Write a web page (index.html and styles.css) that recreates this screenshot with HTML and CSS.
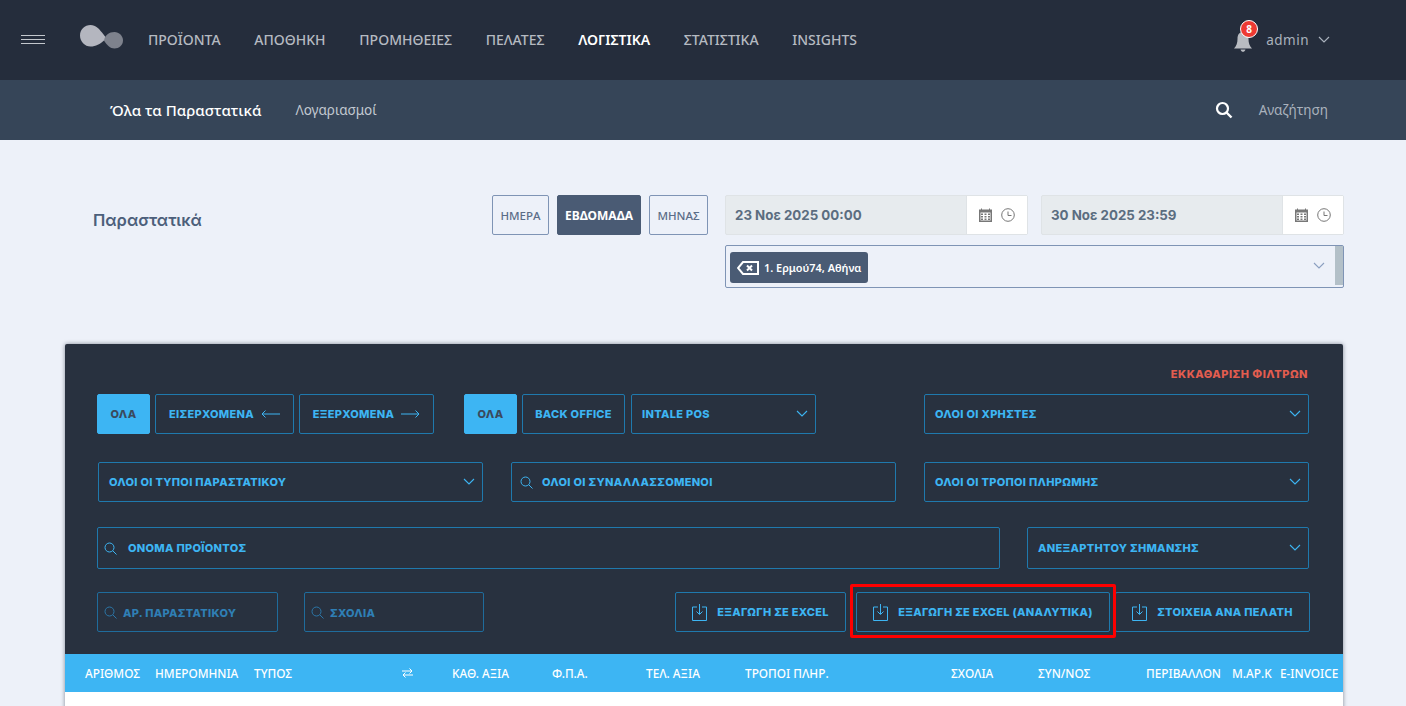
FILE: index.html
```html
<!DOCTYPE html>
<html lang="el">
<head>
<meta charset="utf-8">
<title>Παραστατικά</title>
<link rel="stylesheet" href="styles.css">
</head>
<body>
<header class="topbar">
  <svg class="burger" width="24" height="12" viewBox="0 0 24 12"><path d="M0 1.500h24M0 5.500h24M0 9.500h24" stroke="#c3c7cd" stroke-width="1.200"/></svg>
  <svg class="logo" width="46" height="28" viewBox="0 0 46 28"><path d="M0 12.500C0 6.500 4.800 2 10.500 2 16 2 19 6 22 9.500L27 16 24 17.500C20 21 16 23.500 10.500 23.500 4.800 23.500 0 18.500 0 12.500Z" fill="#b4b6bf"/><path d="M24 17.500C25 12 29 9 34.500 9 39 9 43 13 43 17.500 43 22 39 25.500 34.500 25.500 30 25.500 27 22 24 17.500Z" fill="#7e828d"/></svg>
  <nav class="mainnav">
    <a>ΠΡΟΪΟΝΤΑ</a><a>ΑΠΟΘΗΚΗ</a><a>ΠΡΟΜΗΘΕΙΕΣ</a><a>ΠΕΛΑΤΕΣ</a><a class="on">ΛΟΓΙΣΤΙΚΑ</a><a>ΣΤΑΤΙΣΤΙΚΑ</a><a>INSIGHTS</a>
  </nav>
  <div class="user">
    <div class="bell">
      <svg width="20" height="24" viewBox="0 0 20 24"><path d="M10 3C6 3 4.500 6 4.500 10 4.500 14 3.500 17 1 19.500H19C16.500 17 15.500 14 15.500 10 15.500 6 14 3 10 3ZM7.500 20.500C8 22 9 22.800 10 22.800 11 22.800 12 22 12.500 20.500Z" fill="#b9bcc2"/></svg>
      <span class="badge">8</span>
    </div>
    <span class="uname">admin</span>
    <svg width="12" height="8" viewBox="0 0 12 8"><path d="M1 1l5 5 5-5" fill="none" stroke="#aab2bd" stroke-width="1.200"/></svg>
  </div>
</header>
<div class="subbar">
  <a class="sub-on">Όλα τα Παραστατικά</a>
  <a class="sub-off">Λογαριασμοί</a>
  <svg class="mag" width="18" height="18" viewBox="0 0 18 18"><circle cx="7.500" cy="7.500" r="5.500" fill="none" stroke="#fff" stroke-width="2.200"/><path d="M11.500 11.500l5 5" stroke="#fff" stroke-width="2.400"/></svg>
  <span class="sub-search">Αναζήτηση</span>
</div>
<main class="page">
  <section class="controls">
    <h1 class="title">Παραστατικά</h1>
    <div class="periods">
      <button class="period w-day">ΗΜΕΡΑ</button>
      <button class="period period-on w-week">ΕΒΔΟΜΑΔΑ</button>
      <button class="period w-month">ΜΗΝΑΣ</button>
    </div>
    <div class="dates">
      <div class="daterow">
        <div class="date">
          <span class="date-val">23 Νοε 2025 00:00</span>
          <span class="date-ico">
            <svg width="13" height="14" viewBox="0 0 13 14"><path d="M0 1.500h13V14H0z" fill="#777"/><path d="M1.500 4.500h10v8h-10z" fill="#fff"/><path d="M2 0.500h1v2H2zM10 0.500h1v2h-1zM2 5.500h2v1.500H2zM5.500 5.500h2v1.500h-2zM9 5.500h2v1.500H9zM2 8h2v1.500H2zM5.500 8h2v1.500h-2zM9 8h2v1.500H9zM2 10.500h2V12H2zM5.500 10.500h2V12h-2zM9 10.500h2V12H9z" fill="#777"/></svg>
            <svg width="14" height="14" viewBox="0 0 14 14"><circle cx="7" cy="7" r="6.300" fill="none" stroke="#777"/><path d="M7 3.500V7.500h3.500" fill="none" stroke="#777"/></svg>
          </span>
        </div>
        <div class="date">
          <span class="date-val">30 Νοε 2025 23:59</span>
          <span class="date-ico">
            <svg width="13" height="14" viewBox="0 0 13 14"><path d="M0 1.500h13V14H0z" fill="#777"/><path d="M1.500 4.500h10v8h-10z" fill="#fff"/><path d="M2 0.500h1v2H2zM10 0.500h1v2h-1zM2 5.500h2v1.500H2zM5.500 5.500h2v1.500h-2zM9 5.500h2v1.500H9zM2 8h2v1.500H2zM5.500 8h2v1.500h-2zM9 8h2v1.500H9zM2 10.500h2V12H2zM5.500 10.500h2V12h-2zM9 10.500h2V12H9z" fill="#777"/></svg>
            <svg width="14" height="14" viewBox="0 0 14 14"><circle cx="7" cy="7" r="6.300" fill="none" stroke="#777"/><path d="M7 3.500V7.500h3.500" fill="none" stroke="#777"/></svg>
          </span>
        </div>
      </div>
      <div class="store">
        <span class="tag">
          <svg width="22" height="14" viewBox="0 0 22 14"><path d="M6 1h15v12H6L1 7z" fill="none" stroke="#fff" stroke-width="2"/><path d="M10 4.500l5 5M15 4.500l-5 5" stroke="#fff" stroke-width="2"/></svg>
          1. Ερμού74, Αθήνα
        </span>
        <svg class="store-chev" width="12" height="8" viewBox="0 0 12 8"><path d="M1 1l5 5 5-5" fill="none" stroke="#8b9fc0" stroke-width="1.100"/></svg>
        <span class="store-scroll"></span>
      </div>
    </div>
  </section>

  <section class="panel">
    <div class="panel-body">
      <a class="clear">ΕΚΚΑΘΑΡΙΣΗ ΦΙΛΤΡΩΝ</a>
      <div class="row r1">
        <button class="fbtn fill w-all">ΟΛΑ</button>
        <button class="fbtn w-in">ΕΙΣΕΡΧΟΜΕΝΑ <svg width="19" height="8" viewBox="0 0 19 8"><path d="M19 4H1M4.500 0.500L1 4l3.500 3.500" fill="none" stroke="#3db5f3"/></svg></button>
        <button class="fbtn w-out">ΕΞΕΡΧΟΜΕΝΑ <svg width="19" height="8" viewBox="0 0 19 8"><path d="M0 4h18M14.500 0.500L18 4l-3.500 3.500" fill="none" stroke="#3db5f3"/></svg></button>
        <button class="fbtn fill w-all gap-l">ΟΛΑ</button>
        <button class="fbtn w-bo">BACK OFFICE</button>
        <div class="fsel w-pos">INTALE POS<svg width="12" height="8" viewBox="0 0 12 8"><path d="M1 1l5 5 5-5" fill="none" stroke="#3db5f3" stroke-width="1.100"/></svg></div>
        <div class="fsel w-col push">ΟΛΟΙ ΟΙ ΧΡΗΣΤΕΣ<svg width="12" height="8" viewBox="0 0 12 8"><path d="M1 1l5 5 5-5" fill="none" stroke="#3db5f3" stroke-width="1.100"/></svg></div>
      </div>
      <div class="row r2">
        <div class="fsel w-col">ΟΛΟΙ ΟΙ ΤΥΠΟΙ ΠΑΡΑΣΤΑΤΙΚΟΥ<svg width="12" height="8" viewBox="0 0 12 8"><path d="M1 1l5 5 5-5" fill="none" stroke="#3db5f3" stroke-width="1.100"/></svg></div>
        <div class="fsearch w-col">
          <svg width="13" height="13" viewBox="0 0 13 13"><circle cx="5.500" cy="5.500" r="4.500" fill="none" stroke="#3db5f3"/><path d="M8.800 8.800L12.500 12.500" stroke="#3db5f3"/></svg>
          <span>ΟΛΟΙ ΟΙ ΣΥΝΑΛΛΑΣΣΟΜΕΝΟΙ</span>
        </div>
        <div class="fsel w-col">ΟΛΟΙ ΟΙ ΤΡΟΠΟΙ ΠΛΗΡΩΜΗΣ<svg width="12" height="8" viewBox="0 0 12 8"><path d="M1 1l5 5 5-5" fill="none" stroke="#3db5f3" stroke-width="1.100"/></svg></div>
      </div>
      <div class="row r3">
        <div class="fsearch w-name">
          <svg width="13" height="13" viewBox="0 0 13 13"><circle cx="5.500" cy="5.500" r="4.500" fill="none" stroke="#3db5f3"/><path d="M8.800 8.800L12.500 12.500" stroke="#3db5f3"/></svg>
          <span>ΟΝΟΜΑ ΠΡΟΪΟΝΤΟΣ</span>
        </div>
        <div class="fsel w-ind push">ΑΝΕΞΑΡΤΗΤΟΥ ΣΗΜΑΝΣΗΣ<svg width="12" height="8" viewBox="0 0 12 8"><path d="M1 1l5 5 5-5" fill="none" stroke="#3db5f3" stroke-width="1.100"/></svg></div>
      </div>
      <div class="row r4">
        <div class="fsearch dim w-doc">
          <svg width="13" height="13" viewBox="0 0 13 13"><circle cx="5.500" cy="5.500" r="4.500" fill="none" stroke="#2b76a8"/><path d="M8.800 8.800L12.500 12.500" stroke="#2b76a8"/></svg>
          <span>ΑΡ. ΠΑΡΑΣΤΑΤΙΚΟΥ</span>
        </div>
        <div class="fsearch dim w-notes">
          <svg width="13" height="13" viewBox="0 0 13 13"><circle cx="5.500" cy="5.500" r="4.500" fill="none" stroke="#2b76a8"/><path d="M8.800 8.800L12.500 12.500" stroke="#2b76a8"/></svg>
          <span>ΣΧΟΛΙΑ</span>
        </div>
        <button class="fbtn xbtn w-x1 push"><svg width="15" height="17" viewBox="0 0 15 17"><path d="M5 3H.5v13.500h14V3H10M7.500 0v10M4.500 7.500l3 3 3-3" fill="none" stroke="#3db5f3"/></svg>ΕΞΑΓΩΓΗ ΣΕ EXCEL</button>
        <div class="hl-wrap">
          <button class="fbtn xbtn w-x2"><svg width="15" height="17" viewBox="0 0 15 17"><path d="M5 3H.5v13.500h14V3H10M7.500 0v10M4.500 7.500l3 3 3-3" fill="none" stroke="#3db5f3"/></svg>ΕΞΑΓΩΓΗ ΣΕ EXCEL (ΑΝΑΛΥΤΙΚΑ)</button>
          <span class="highlight"></span>
        </div>
        <button class="fbtn xbtn w-x3"><svg width="15" height="17" viewBox="0 0 15 17"><path d="M5 3H.5v13.500h14V3H10M7.500 0v10M4.500 7.500l3 3 3-3" fill="none" stroke="#3db5f3"/></svg>ΣΤΟΙΧΕΙΑ ΑΝΑ ΠΕΛΑΤΗ</button>
      </div>
    </div>
    <div class="thead">
      <span>ΑΡΙΘΜΟΣ</span><span>ΗΜΕΡΟΜΗΝΙΑ</span><span>ΤΥΠΟΣ</span>
      <span class="swap"><svg width="11" height="10" viewBox="0 0 11 10"><path d="M0 3h10M7.500 .5L10 3 7.500 5.500M11 7H1M3.500 4.500L1 7l2.500 2.500" fill="none" stroke="#fff"/></svg></span>
      <span>ΚΑΘ. ΑΞΙΑ</span><span>Φ.Π.Α.</span><span>ΤΕΛ. ΑΞΙΑ</span><span>ΤΡΟΠΟΙ ΠΛΗΡ.</span><span>ΣΧΟΛΙΑ</span><span>ΣΥΝ/ΝΟΣ</span><span>ΠΕΡΙΒΑΛΛΟΝ</span><span>Μ.ΑΡ.Κ</span><span>E-INVOICE</span>
    </div>
    <div class="tbody"></div>
  </section>
</main>
</body>
</html>
```
FILE: styles.css
```css
* { box-sizing: border-box; }
html, body { margin: 0; height: 100%; overflow: hidden; }
body { background: #edf1f9; font-family: "Noto Sans", sans-serif; color: #4a5b74; }
button { font-family: inherit; cursor: pointer; background: none; }

.topbar { height: 80px; background: #252d3c; display: flex; align-items: center; padding-left: 21px; }
.logo { margin-left: 35px; margin-top: -7px; }
.mainnav { display: flex; gap: 33.700px; margin-left: 22px; margin-top: -2px; }
.mainnav a { font-size: 14px; font-weight: 500; color: #b5bac1; white-space: nowrap; }
.mainnav a.on { color: #fff; font-weight: 600; }
.user { margin-left: auto; margin-right: 76px; display: flex; align-items: center; }
.bell { position: relative; width: 20px; height: 24px; margin-top: 2px; }
.badge { position: absolute; left: 7px; top: -9px; width: 18px; height: 18px; border-radius: 50%; background: #ee3a33; border: 1px solid #fff; color: #fff; font-size: 10px; font-weight: 700; display: flex; align-items: center; justify-content: center; }
.uname { margin-left: 13px; margin-right: 9px; font-size: 13.500px; color: #aab2bd; letter-spacing: .5px; }

.subbar { height: 60px; background: #364558; display: flex; align-items: center; padding-left: 110px; padding-right: 78px; }
.sub-on { font-size: 15px; font-weight: 500; color: #fff; }
.sub-off { margin-left: 34px; font-size: 13.500px; color: #c3c9d1; }
.mag { margin-left: auto; }
.sub-search { margin-left: 26px; font-size: 13.500px; color: #aab2bd; }

.page { padding-top: 55px; }
.controls { display: flex; height: 149px; padding-right: 62px; align-items: flex-start; }
.title { margin: 14px 0 0 93px; font-family: Inter, sans-serif; font-size: 16.500px; font-weight: 600; color: #4c5f7b; line-height: 22px; }
.periods { display: flex; gap: 8px; margin-left: auto; margin-right: 17px; }
.period { height: 40px; padding: 0; border: 1px solid #7f94b5; border-radius: 2px; font-size: 11.500px; font-weight: 500; color: #5b6d88; }
.period-on { background: #4a5b74; border-color: #4a5b74; color: #fff; font-weight: 700; font-size: 12px; }
.w-day { width: 57px; }
.w-week { width: 84px; }
.w-month { width: 59px; }
.dates { width: 619px; }
.daterow { display: flex; gap: 13px; }
.date { flex: 1; height: 40px; display: flex; border: 1px solid #dfe3e6; background: #e7ebee; border-radius: 2px; }
.date-val { flex: 1; padding-left: 9px; line-height: 38px; font-family: Inter, sans-serif; font-size: 13.300px; font-weight: 700; color: #5b6d80; white-space: nowrap; }
.date-ico { width: 61px; background: #fff; display: flex; align-items: center; justify-content: center; gap: 9px; border-left: 1px solid #dfe3e6; }
.store { position: relative; height: 43px; margin-top: 10px; border: 1px solid #7f94b5; border-radius: 2px; padding: 6px 4px; }
.tag { display: inline-flex; align-items: center; gap: 5px; height: 31px; padding: 0 7px; background: #4a5b74; border-radius: 3px; color: #fff; font-size: 10.900px; font-weight: 600; }
.store-chev { position: absolute; right: 18px; top: 16px; }
.store-scroll { position: absolute; right: 0; top: 0; width: 8px; height: 39px; background: #b3c0c8; }

.panel { margin-left: 65px; width: 1278px; background: #28313f; box-shadow: 0 0 4px rgba(40,50,70,.55); border-radius: 2px 2px 0 0; }
.panel-body { position: relative; height: 310px; padding: 50px 33px 0 32px; font-family: Inter, sans-serif; }
.clear { position: absolute; right: 35px; top: 23px; font-size: 11px; font-weight: 800; color: #e35d4f; letter-spacing: .5px; }
.row { display: flex; align-items: center; }
.r1, .r3 { padding-right: 1px; }
.r2 { margin-top: 28px; padding-left: 1px; padding-right: 1px; gap: 28px; }
.r3 { margin-top: 25px; }
.r4 { margin-top: 23px; }
.fbtn, .fsel, .fsearch { height: 40px; border: 1px solid #1f79ad; border-radius: 2px; font-size: 11px; font-weight: 800; color: #3db5f3; letter-spacing: .3px; white-space: nowrap; }
.fbtn { display: flex; align-items: center; justify-content: center; gap: 7px; padding: 0; margin-left: 5px; }
.r1 .fbtn:first-child { margin-left: 0; }
.fill { background: #3db5f3; border-color: #3db5f3; color: #3a4a5e; }
.w-all { width: 53px; }
.w-in { width: 139px; }
.w-out { width: 135px; }
.gap-l { margin-left: 30px; }
.w-bo { width: 103px; }
.fsel { display: flex; align-items: center; justify-content: space-between; padding: 0 7px 0 10px; }
.w-pos { width: 185px; margin-left: 6px; }
.w-col { width: 385px; }
.push { margin-left: auto; }
.fsearch { display: flex; align-items: center; gap: 9px; padding-left: 8px; }
.w-name { width: 903px; height: 42px; gap: 11px; padding-left: 6px; }
.w-ind { width: 282px; height: 42px; }
.dim { color: #2f7fb5; gap: 6px; padding-left: 6px; border-color: #1f6c9c; }
.dim span { padding-top: 2px; }
.w-doc { width: 181px; }
.w-notes { width: 180px; margin-left: 26px; }
.xbtn { gap: 10px; }
.w-x1 { width: 171px; margin-left: auto; }
.hl-wrap { position: relative; margin-left: 10px; }
.hl-wrap .fbtn { margin-left: 0; }
.w-x2 { width: 254px; }
.w-x3 { width: 195px; }
.highlight { position: absolute; left: -6px; top: -8px; width: 266px; height: 54px; border: 3px solid #f00; border-radius: 2px; pointer-events: none; }

.thead { height: 38px; background: #3db5f3; display: grid; align-items: center; color: #fff; font-size: 11.800px; font-weight: 500; white-space: nowrap;
  grid-template-columns: 70px 99px 148px 50px 100px 94px 99px 206px 87px 108px 86px 48px 59px; padding-left: 20px; }
.swap { display: flex; }
.tbody { height: 40px; background: #fff; }
```
